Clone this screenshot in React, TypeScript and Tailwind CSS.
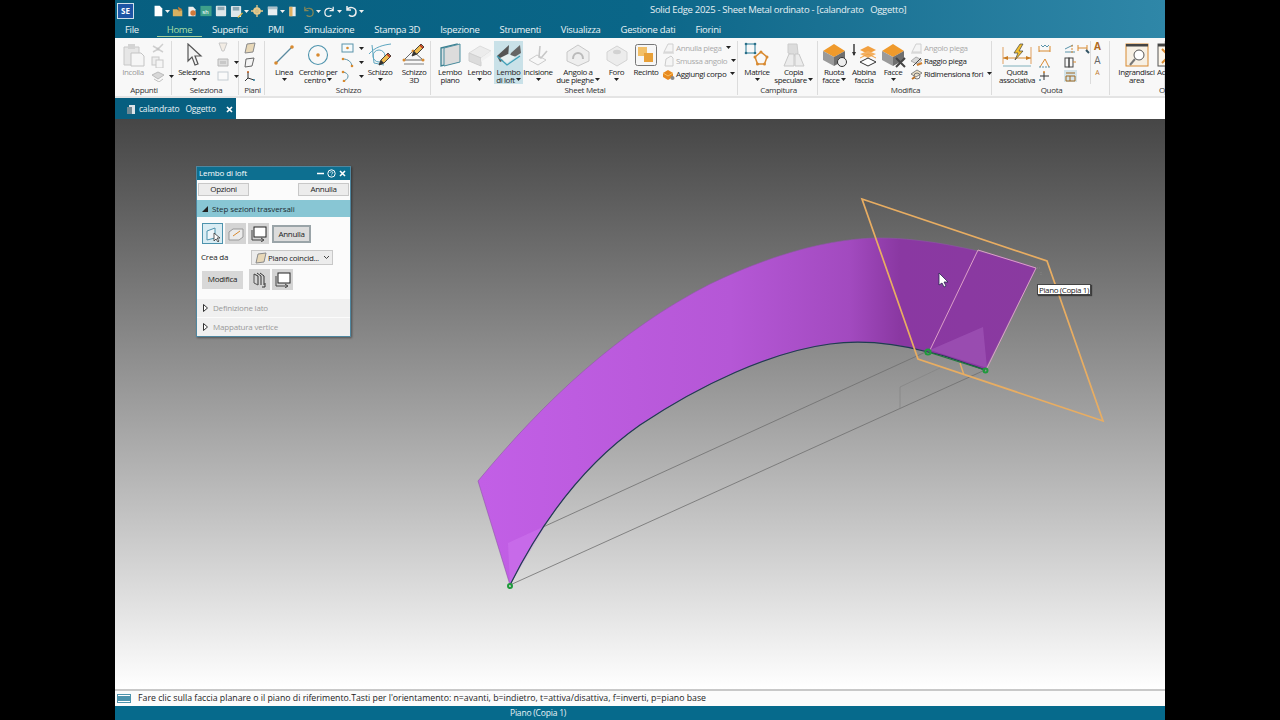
import React from "react";

const F = "font-['Open_Sans',sans-serif]";

const S = ({ w, h, children, className = "" }: { w: number; h: number; children: React.ReactNode; className?: string }) => (
  <svg width={w} height={h} viewBox={`0 0 ${w} ${h}`} className={`shrink-0 ${className}`}>{children}</svg>
);

const Caret = ({ color = "#222" }: { color?: string }) => (
  <svg width="5" height="3" viewBox="0 0 5 3" className="inline-block shrink-0"><path d="M0 0h5L2.5 3z" fill={color} /></svg>
);

const Btn = ({ w, l1, l2, caret, icon, active, dim }: { w: number; l1: string; l2?: string; caret?: "inline" | "below"; icon: React.ReactNode; active?: boolean; dim?: boolean }) => (
  <div style={{ width: w }} className={`flex h-[43px] shrink-0 flex-col items-center ${active ? "bg-[#c9e1e8]" : ""}`}>
    <div className="flex h-[27px] w-full items-center justify-center">{icon}</div>
    <div className={`whitespace-nowrap text-center text-[8px] leading-[8px] tracking-[-0.4px] ${dim ? "text-[#999]" : "text-[#222]"}`}>{l1}</div>
    {l2 ? (
      <div className="flex items-center gap-[1px] whitespace-nowrap text-center text-[8px] leading-[7.5px] tracking-[-0.4px] text-[#222]">
        {l2}{caret === "inline" && <Caret />}
      </div>
    ) : caret === "below" ? (
      <div className="mt-[2px] flex h-[3px] items-center"><Caret /></div>
    ) : null}
  </div>
);

const Group = ({ w, label, labelW = "pl-[2px] text-center", children }: { w: number; label: string; labelW?: string; children: React.ReactNode }) => (
  <div style={{ width: w }} className="relative flex h-[54px] shrink-0 flex-col border-r border-[#dcdcdc]">
    <div className="flex h-[43px] w-full">{children}</div>
    <div className={`mt-[1px] whitespace-nowrap text-[8px] leading-[9px] tracking-[-0.3px] text-[#333] ${labelW}`}>{label}</div>
  </div>
);

const Row = ({ icon, text, dim, caret }: { icon: React.ReactNode; text?: string; dim?: boolean; caret?: boolean }) => (
  <div className={`flex items-center gap-[1px] ${text ? "h-[13px]" : "h-[14px]"}`}>
    {icon}
    {text && <span className={`whitespace-nowrap text-[8px] tracking-[-0.38px] ${dim ? "text-[#aaa]" : "text-[#222]"}`}>{text}</span>}
    {caret && <span className="ml-[3px] flex"><Caret /></span>}
  </div>
);

/* ----- ribbon icons ----- */
const Paste = () => (
  <S w={24} h={24}><path d="M3 4h15v18H3z" fill="#e6e6e6" stroke="#c8c8c8" /><path d="M7 1h7v5H7z" fill="#d4d4d4" /><path d="M10 10h10l3 3v10H10z" fill="#f6f6f6" stroke="#c4c4c4" /></S>
);
const SmallGray = ({ k = 0 }: { k?: number }) => (
  <S w={14} h={12}>
    {k === 0 && <><path d="M2 4l5 3 5-5M2 10l5-3 5 3" stroke="#cfcfcf" strokeWidth="1.5" fill="none" /><circle cx="7" cy="7" r="1.5" fill="#c4c4c4" /></>}
    {k === 1 && <><rect x="1" y="1" width="7" height="8" fill="#eee" stroke="#c8c8c8" /><rect x="5" y="4" width="7" height="8" fill="#f6f6f6" stroke="#c8c8c8" /></>}
    {k === 2 && <><path d="M1 5l6-3 6 3-6 4z" fill="#d8d8d8" stroke="#bbb" /><path d="M3 9l5 3 4-3" fill="none" stroke="#c0c0c0" /></>}
    {k === 3 && <><path d="M3 1h8l-3 8H6z" fill="#f2ece4" stroke="#c8c8c8" /></>}
    {k === 4 && <><path d="M2 3h10v7H2z" fill="#dedede" stroke="#b8b8b8" /><path d="M4 5h6v3H4z" fill="#c8c8c8" /></>}
    {k === 5 && <><rect x="2" y="2" width="10" height="8" fill="#fafafa" stroke="#c4ccd2" /></>}
  </S>
);
const Cursor = () => (
  <S w={18} h={24}><path d="M3 1l0 17 4-4 3 8 3-1-3-8 6 0z" fill="#f3f3f3" stroke="#555" strokeWidth="1.2" /></S>
);
const Plane = ({ k }: { k: number }) => (
  <S w={14} h={12}>
    {k === 0 && <path d="M4 2l8-1-2 9-8 1z" fill="#e8d8b8" stroke="#8a8a8a" />}
    {k === 1 && <path d="M3 3l8-1-2 8-7 1z" fill="#f4f4f4" stroke="#666" />}
    {k === 2 && <g stroke="#333" fill="none"><path d="M5 2v6l-3 3M5 8l6 2" /><circle cx="5" cy="2" r="1" fill="#c06020" stroke="none" /><circle cx="11" cy="10" r="1" fill="#3080a0" stroke="none" /></g>}
  </S>
);
const LineI = () => (
  <S w={24} h={24}><path d="M4 20L20 4" stroke="#5a8aa0" strokeWidth="1.2" /><circle cx="4" cy="20" r="1.8" fill="#d88a30" /><circle cx="20" cy="4" r="1.8" fill="#d88a30" /></S>
);
const CircleI = () => (
  <S w={24} h={24}><circle cx="12" cy="12" r="9.5" fill="none" stroke="#4d93ad" strokeWidth="1.1" /><circle cx="12" cy="12" r="1.8" fill="#d88a30" /></S>
);
const Sk = ({ k }: { k: number }) => (
  <S w={14} h={12}>
    {k === 0 && <><rect x="1" y="2" width="11" height="8" fill="#f4fafc" stroke="#5a93aa" /><circle cx="6.5" cy="6" r="1.3" fill="#d88a30" /></>}
    {k === 1 && <><path d="M2 3c5 0 9 3 9 8" stroke="#5a93aa" fill="none" /><circle cx="2" cy="3" r="1.3" fill="#d88a30" /><circle cx="11" cy="10" r="1.3" fill="#d88a30" /></>}
    {k === 2 && <><path d="M2 2c6 1 7 6 1 9" stroke="#5a93aa" fill="none" /><circle cx="2" cy="2" r="1.3" fill="#d88a30" /><circle cx="3" cy="11" r="1.3" fill="#d88a30" /></>}
  </S>
);
const Pencil = ({ x, y }: { x: number; y: number }) => (
  <g transform={`translate(${x} ${y})`}>
    <path d="M0 12l2-5L9 0l3 3-7 7z" fill="#eebb50" stroke="#333" strokeWidth="0.9" />
    <path d="M8 1l3 3" stroke="#b83020" strokeWidth="1.6" />
    <path d="M0 12l2-5 3 3z" fill="#333" />
  </g>
);
const Schizzo = () => (
  <S w={26} h={26}><path d="M2 12C8 5 16 3 24 2" stroke="#5da6c0" fill="none" /><path d="M5 3l2 18 10 2" stroke="#5da6c0" fill="none" /><circle cx="12" cy="14" r="6" fill="none" stroke="#5da6c0" /><Pencil x={12} y={11} /></S>
);
const Schizzo3D = () => (
  <S w={26} h={26}><path d="M3 18L12 9l10 9z" fill="none" stroke="#666" /><path d="M3 22h20" stroke="#bbb" strokeWidth="2" /><circle cx="3" cy="18" r="1.5" fill="#d88a30" /><circle cx="12" cy="9" r="1.5" fill="#d88a30" /><circle cx="22" cy="18" r="1.5" fill="#d88a30" /><Pencil x={11} y={2} /></S>
);
const LemboPiano = () => (
  <S w={24} h={26}><path d="M3 6l16-4v18L3 24z" fill="#d8dfe2" stroke="#3b7f90" strokeWidth="1.3" /><path d="M6 6l16-4v18l-16 4z" fill="#dcdcdc" stroke="#4d8e9f" /></S>
);
const Lembo = () => (
  <S w={24} h={24}><path d="M1 10l11-7 11 5-10 7z" fill="#ececec" stroke="#ddd" /><path d="M1 10l12 5v8L1 18z" fill="#dcdcdc" stroke="#d0d0d0" /><path d="M13 15l10-7v4l-10 7z" fill="#f2f2f2" /></S>
);
const Loft = () => (
  <S w={26} h={26}><path d="M1 14l3 6 8-4 1-13z" fill="#555" /><path d="M12 19l13-8-1-8-9 8z" fill="#666" /><path d="M1 14l10 9 13-9" fill="none" stroke="#40a0b8" strokeWidth="1.3" /><path d="M4 16l7 5 9-6-8-3z" fill="#e6f0f2" /></S>
);
const Incisione = () => (
  <S w={24} h={24}><path d="M3 17l8-5 9 5-8 5z" fill="none" stroke="#ccc" /><path d="M14 3l-1 11 2 1 6-7" fill="none" stroke="#c8c8c8" strokeWidth="1.6" /></S>
);
const Angolo = () => (
  <S w={26} h={24}><path d="M2 9l11-7 11 7v9l-11 5L2 18z" fill="#eee" stroke="#c8c8c8" /><path d="M8 16c0-8 10-8 10 0" fill="none" stroke="#bbb" strokeWidth="2" /></S>
);
const Foro = () => (
  <S w={24} h={24}><path d="M2 9l10-6 10 6v8l-10 6-10-6z" fill="#ececec" stroke="#d4d4d4" /><ellipse cx="12" cy="9" rx="4" ry="2.2" fill="#d2d2d2" /></S>
);
const Recinto = () => (
  <S w={22} h={22}><rect x="0.5" y="0.5" width="21" height="21" rx="2" fill="#f6f6f6" stroke="#777" /><rect x="3" y="3" width="9" height="9" fill="#f3c068" /><rect x="9" y="9" width="9" height="9" fill="#e8a038" /></S>
);
const Tiny = ({ k }: { k: number }) => (
  <S w={13} h={12}>
    {k === 0 && <><path d="M2 10l4-8h5v8z" fill="#f5f5f5" stroke="#d0d0d0" /><path d="M1 11h11" stroke="#ccc" /></>}
    {k === 1 && <path d="M3 11l1-7 5-3 2 2v8z" fill="#f5f5f5" stroke="#ccc" />}
    {k === 2 && <><path d="M1 5l5-3 5 3v4l-5 3-5-3z" fill="#e88a20" /><path d="M1 5l5 3 5-3" fill="none" stroke="#f8c060" /><circle cx="10.5" cy="10" r="2" fill="#888" /></>}
    {k === 3 && <><path d="M1 6l5-4 6 3-5 4z" fill="#d8d8d8" stroke="#aaa" /><path d="M3 11l8-8" stroke="#444" /><path d="M7 10l5-2" stroke="#d08030" strokeWidth="2" /></>}
    {k === 4 && <><path d="M1 6l6-4 5 3-6 4z" fill="#eadfc6" stroke="#888" /><circle cx="7" cy="8" r="3" fill="none" stroke="#777" /><path d="M2 11l3-2" stroke="#c07020" strokeWidth="2" /></>}
  </S>
);
const Matrice = () => (
  <S w={26} h={26}>
    <rect x="2" y="2" width="9" height="9" fill="none" stroke="#4a90a8" strokeWidth="1.2" />
    {[[2, 2], [11, 2], [2, 11], [11, 11]].map(([a, b], i) => <circle key={i} cx={a} cy={b} r="1.3" fill="#2a6f88" />)}
    <path d="M17 10l6 5-2.5 7h-7L11 15z" fill="none" stroke="#d88a30" strokeWidth="1.5" />
    {[[17, 10], [23, 15], [20.5, 22], [13.5, 22], [11, 15]].map(([a, b], i) => <circle key={i} cx={a} cy={b} r="1.5" fill="#d88a30" />)}
  </S>
);
const Copia = () => (
  <S w={24} h={26}><path d="M6 2h9l1 9-3 3-7-3z" fill="#dcdcdc" stroke="#ccc" /><path d="M2 24l5-12h5v12zM13 24v-12h4l5 12z" fill="#ececec" stroke="#c8c8c8" /></S>
);
const Box = ({ children }: { children?: React.ReactNode }) => (
  <S w={28} h={26}>
    <path d="M3 9l11-7 11 7-11 6z" fill="#ef9a2c" />
    <path d="M3 9l11 6v9L3 18z" fill="#9a9a9a" />
    <path d="M14 15l11-6v9l-11 6z" fill="#6f6f6f" />
    {children}
  </S>
);
const Abbina = () => (
  <S w={26} h={26}><path d="M3 2v11" stroke="#333" strokeWidth="1.4" /><path d="M1 10l2 4 2-4z" fill="#333" /><path d="M9 8l8-4 8 4-8 4z" fill="#f2a040" /><path d="M9 12l8-3 8 3-8 4z" fill="#f4b060" /><path d="M9 20l8-4 8 4-8 4z" fill="#fff" stroke="#333" /><path d="M9 16l8-4 8 4" fill="none" stroke="#f0a040" /></S>
);
const QuotaA = () => (
  <S w={30} h={26}><path d="M1 5v17M29 5v17" stroke="#e0a060" /><path d="M1 16h28" stroke="#d88a30" /><path d="M1 16l5-2v4zM29 16l-5-2v4z" fill="#c87a20" /><path d="M18 2l-6 9h4l-3 7 8-9h-4l4-7z" fill="#f4c030" stroke="#444" strokeWidth="0.7" /><path d="M1 24h28" stroke="#a8c8d0" strokeWidth="1.5" /></S>
);
const Q = ({ k }: { k: number }) => (
  <S w={13} h={12}>
    {k === 0 && <><path d="M1 4v6M12 4v6M1 9h11" stroke="#d88a30" /><path d="M3 3l2 2 2-2 2 2 2-2" stroke="#5a93aa" fill="none" /></>}
    {k === 1 && <><path d="M2 11l5-8 4 8" stroke="#d88a30" fill="none" /><path d="M1 11h11" stroke="#5a93aa" strokeDasharray="2 1" /></>}
    {k === 2 && <><path d="M6 2v8M2 6h9" stroke="#333" /><circle cx="6" cy="2" r="1" fill="#d88a30" /><circle cx="2" cy="10" r="1" fill="#5a93aa" /></>}
    {k === 3 && <><path d="M1 7l8-4M1 10h10" stroke="#5a93aa" /><path d="M8 3v8" stroke="#d88a30" strokeDasharray="2 1" /></>}
    {k === 4 && <><rect x="1" y="2" width="4" height="9" fill="none" stroke="#444" /><rect x="5" y="2" width="4" height="9" fill="none" stroke="#444" /><path d="M9 6h3" stroke="#d88a30" /></>}
    {k === 5 && <><rect x="0" y="0" width="13" height="12" fill="#d4e4ea" /><path d="M2 3h9M2 6h9v5H2zM6 6v5" stroke="#a06820" fill="none" /></>}
    {k === 6 && <><path d="M1 3v6M10 3v6M1 6h9" stroke="#d88a30" /><path d="M9 8l3 3" stroke="#356" strokeWidth="2" /></>}
  </S>
);
const Zoom = () => (
  <S w={24} h={24}><rect x="1" y="1" width="22" height="22" fill="#f7f0e4" stroke="#d88a30" /><rect x="1" y="1" width="22" height="2.500" fill="#444" /><circle cx="14" cy="12" r="5" fill="#fff" stroke="#555" /><path d="M10 16l-5 6" stroke="#777" strokeWidth="2" /></S>
);
const Fit = () => (
  <S w={24} h={24}><rect x="1" y="1" width="22" height="22" fill="#fdf6ea" stroke="#555" /><rect x="1" y="1" width="22" height="2.500" fill="#444" /><path d="M5 6l5 5M19 6l-5 5M5 20l5-5M19 20l-5-5" stroke="#d88a30" strokeWidth="2" /></S>
);

/* ----- quick-access bar ----- */
const QA = ({ children, caret, w = 12, mr = "mr-[3px]" }: { children: React.ReactNode; caret?: boolean; w?: number; mr?: string }) => (
  <div className={`flex shrink-0 items-center gap-[1px] ${mr}`}>
    <svg width={w} height={w} viewBox="0 0 14 14" className="shrink-0">{children}</svg>
    {caret && <Caret color="#f0f0f0" />}
  </div>
);

const Qat = () => (
  <div className="ml-[18px] flex items-center">
    <QA caret w={12} mr="mr-[2px]"><path d="M3 1h6l3 3v9H3z" fill="#fff" /></QA>
    <QA w={12} mr="mr-[2px]"><path d="M1 5h5l1 1h5v7H1z" fill="#d8b060" /><path d="M7 2l5 3-4 3z" fill="#c87a30" /></QA>
    <QA w={11} mr="mr-[3px]"><path d="M3 1h6l3 3v9H3z" fill="#eee" /><circle cx="9" cy="9" r="3.500" fill="#d0793a" /></QA>
    <QA w={12}><rect x="0.500" y="1" width="13" height="12" fill="#3ea08a" /><text x="2.500" y="10" fontSize="7" fill="#fff" fontFamily="Liberation Sans">sh</text></QA>
    <QA w={12}><rect x="1" y="1" width="12" height="12" rx="1" fill="#dfe7ea" /><rect x="3" y="2" width="8" height="4" fill="#8ca7b2" /></QA>
    <QA caret w={13} mr="mr-[2px]"><rect x="1" y="1" width="11" height="12" rx="1" fill="#dfe7ea" /><rect x="3" y="2" width="7" height="4" fill="#8ca7b2" /><path d="M8 13l5-5 1 1-5 5z" fill="#e6b640" /></QA>
    <QA w={12} mr="mr-[4px]"><circle cx="7" cy="7" r="4.500" fill="#e8c98a" /><circle cx="7" cy="7" r="1.800" fill="#0c6585" /><path d="M7 0v14M0 7h14" stroke="#e8c98a" strokeWidth="1.500" /></QA>
    <QA caret w={12} mr="mr-[2px]"><rect x="1" y="2" width="11" height="10" fill="#e8eef0" /><rect x="1" y="2" width="11" height="3" fill="#aac0c8" /></QA>
    <QA w={11} mr="mr-[4px]"><rect x="3" y="1" width="8" height="12" fill="#e6ecee" /><rect x="3" y="1" width="4" height="12" fill="#e0b060" /></QA>
    <QA caret w={13} mr="mr-[2px]"><path d="M3 6c2-4 9-3 9 2s-5 5-7 3M3 2v4h4" fill="none" stroke="#c89a40" strokeWidth="1.300" opacity="0.65" /></QA>
    <QA caret w={13} mr="mr-[2px]"><path d="M11 6C9 2 2 3 2 8s5 5 7 3M11 2v4H7" fill="none" stroke="#f0f0f0" strokeWidth="1.300" /></QA>
    <QA caret w={14}><path d="M3 6c2-4 9-3 9 2s-5 5-7 3M3 2v4h4" fill="none" stroke="#f0f0f0" strokeWidth="1.500" /></QA>
  </div>
);

const tabs = ["Superfici", "PMI", "Simulazione", "Stampa 3D", "Ispezione", "Strumenti", "Visualizza", "Gestione dati", "Fiorini"];

/* ----- dialog bits ----- */
const DBtn = ({ children, active }: { children: React.ReactNode; active?: boolean }) => (
  <div className={`flex h-[21px] w-[21px] items-center justify-center ${active ? "border border-[#4d93ad] bg-[#d9ecf3]" : "bg-[#d4d4d4]"}`}>{children}</div>
);
const Frame = () => (
  <S w={17} h={16}><rect x="4" y="1" width="12" height="10" fill="#fff" stroke="#222" /><path d="M2 4v10h11M11 12l3 2-3 2" fill="none" stroke="#444" /></S>
);
const DSection = ({ label }: { label: string }) => (
  <div className="mt-[1px] flex h-[18px] items-center gap-[5px] bg-[#f0f0f0] pl-[6px] text-[8px] tracking-[-0.2px] text-[#9a9a9a]">
    <svg width="5" height="8" viewBox="0 0 5 8"><path d="M0.500 0.500L4.500 4 0.500 7.500z" fill="#fff" stroke="#333" /></svg>
    {label}
  </div>
);

const Dialog = () => (
  <div className="absolute left-[81px] top-[47px] w-[155px] border border-[#4f87a0] bg-[#fbfbfb] shadow-[1px_1px_2px_rgba(0,0,0,0.4)]">
    <div className="flex h-[13px] items-center justify-between bg-[#0d6f90] pb-[1px] pl-[2px] pr-[4px] text-[8px] tracking-[-0.1px] text-white">
      <span>Lembo di loft</span>
      <div className="flex items-center gap-[3px]">
        <S w={7} h={7}><path d="M0 3.500h7" stroke="#fff" strokeWidth="1.500" /></S>
        <S w={9} h={9}><circle cx="4.500" cy="4.500" r="3.700" fill="none" stroke="#fff" /><path d="M3.200 3.600c.3-1.400 2.800-1.200 2.600.2-.1.800-1.200.9-1.200 1.700M4.600 6.600v.6" fill="none" stroke="#fff" strokeWidth="0.800" /></S>
        <S w={7} h={7}><path d="M1 1l5 5M6 1L1 6" stroke="#fff" strokeWidth="1.600" /></S>
      </div>
    </div>
    <div className="flex justify-between px-[1px] pt-[3px]">
      <div className="flex h-[13px] w-[51px] items-center justify-center border border-[#c8c8c8] bg-[#ececec] pb-[1px] text-[8px] tracking-[-0.3px] text-[#222]">Opzioni</div>
      <div className="flex h-[13px] w-[51px] items-center justify-center border border-[#c8c8c8] bg-[#ececec] pb-[1px] text-[8px] tracking-[-0.3px] text-[#222]">Annulla</div>
    </div>
    <div className="mt-[4px] flex h-[17px] items-center gap-[4px] bg-[#88c6d4] pl-[5px] pt-[1px] text-[8px] tracking-[-0.1px] text-[#1c2c32]">
      <svg width="6" height="6" viewBox="0 0 6 6"><path d="M6 0v6H0z" fill="#222" /></svg>
      Step sezioni trasversali
    </div>
    <div className="flex items-center gap-[2px] pl-[5px] pt-[6px]">
      <DBtn active><S w={16} h={16}><path d="M2 5l8-3v10l-8 2z" fill="#eef6fa" stroke="#4d93ad" /><path d="M9 7v8l2-2 2 3 1-1-2-3h3z" fill="#fff" stroke="#333" strokeWidth="0.800" /></S></DBtn>
      <DBtn><S w={16} h={14}><path d="M1 5l4-3h10v8l-4 3H1z" fill="#ececec" stroke="#999" /><path d="M5 9l7-5" stroke="#d88a30" /></S></DBtn>
      <DBtn><Frame /></DBtn>
      <div className="ml-[1px] flex h-[18px] w-[39px] items-center justify-center border-2 border-[#9aa4a8] bg-[#dcdcdc] text-[8px] tracking-[-0.3px] text-[#222]">Annulla</div>
    </div>
    <div className="flex items-center pl-[4px] pt-[6px] text-[8px] tracking-[-0.2px] text-[#222]">
      <span className="w-[50px] pb-[1px]">Crea da</span>
      <div className="flex h-[15px] w-[82px] items-center border border-[#c8c8c8] bg-[#ececec] pl-[2px]">
        <Plane k={0} />
        <span className="whitespace-nowrap text-[8px] tracking-[-0.3px]">Piano coincid...</span>
        <svg width="7" height="5" viewBox="0 0 7 5" className="ml-auto mr-[2px]"><path d="M1 1l2.500 2.500L6 1" fill="none" stroke="#444" /></svg>
      </div>
    </div>
    <div className="flex items-center pl-[5px] pt-[4px]">
      <div className="mr-[6px] flex h-[18px] w-[41px] items-center justify-center bg-[#d8d8d8] pb-[1px] text-[8px] tracking-[-0.3px] text-[#222]">Modifica</div>
      <DBtn><S w={17} h={16}><path d="M3 2l4 2v9M6 1l4 3v9M9 1l4 3v9" fill="none" stroke="#333" /><path d="M3 2v9l4 2" fill="none" stroke="#555" /><path d="M14 11v4h-3" fill="none" stroke="#333" /></S></DBtn>
      <div className="ml-[2px]"><DBtn><Frame /></DBtn></div>
    </div>
    <div className="mt-[9px]">
      <DSection label="Definizione lato" />
      <DSection label="Mappatura vertice" />
    </div>
  </div>
);

/* ----- the 3-D model, drawn in page coordinates ----- */
const Model = () => (
  <svg className="absolute inset-0" width="1050" height="570" viewBox="115 119 1050 570">
    <defs>
      <linearGradient id="sheet" gradientUnits="userSpaceOnUse" x1="480" y1="0" x2="1036" y2="0">
        <stop offset="0" stopColor="#c25fe6" />
        <stop offset="0.45" stopColor="#b557d6" />
        <stop offset="0.665" stopColor="#a24abf" />
        <stop offset="0.755" stopColor="#8a38a2" />
        <stop offset="1" stopColor="#8a3aa0" />
      </linearGradient>
    </defs>
    <path d="M510 585L985 370M508 543L930 350" stroke="#6f6f6f" strokeWidth="0.8" fill="none" />
    <path d="M900 408V387L940 368" stroke="#858585" strokeWidth="0.8" fill="none" />
    <path
      d="M478 481C545 400 620 330 710 284C770 255 830 238 880 238C925 238 985 250 1036 268L985 370C965 363 945 355 928 352C890 342 860 340 830 344C770 352 700 385 640 425C590 460 545 515 510 585Z"
      fill="url(#sheet)"
      stroke="#8f55a8"
      strokeWidth="0.6"
    />
    <path d="M510 585L508 543L545 526Z" fill="#d07af0" opacity="0.45" />
    <path d="M930 350L983 327L987 368Z" fill="#a55dbd" opacity="0.55" />
    <path
      d="M985 370C965 363 945 355 928 352C890 342 860 340 830 344C770 352 700 385 640 425C590 460 545 515 510 585"
      fill="none"
      stroke="#1f3d50"
      strokeWidth="1.2"
    />
    <path d="M928 352L985 370" stroke="#1f7a3a" strokeWidth="1.2" />
    <path d="M862 199L1047 261L1103 421L918 359Z" fill="none" stroke="#e8ad62" strokeWidth="1.7" />
    <path d="M960 363l4 12" stroke="#e8ad62" strokeWidth="1.4" />
    <path d="M930 350L978 250L1036 268L987 368" fill="none" stroke="#dca0c8" strokeWidth="1" />
    <g fill="none" stroke="#1f9a3c" strokeWidth="2">
      <circle cx="928" cy="352" r="2.6" />
      <circle cx="985.500" cy="370.500" r="2" />
      <circle cx="510" cy="586" r="2" />
    </g>
    <path d="M1037 268l4 0M1041 272v4" stroke="#888" strokeWidth="0.8" strokeDasharray="1 1" />
    <path d="M939 273v12l3-2 2 4 2-1-2-4h4z" fill="#fff" stroke="#2a2a50" strokeWidth="0.8" />
  </svg>
);

export default function App() {
  return (
    <div className={`flex h-[720px] w-[1280px] justify-center overflow-hidden bg-black ${F}`}>
      <div className="flex h-[720px] w-[1050px] flex-col overflow-hidden">
        {/* title + menu */}
        <div className="h-[38px] shrink-0 bg-gradient-to-r from-[#075f80] via-[#0a6688] to-[#2f87a8]">
          <div className="relative flex h-[22px] items-center">
            <div className="ml-[2px] flex h-[16px] w-[17px] items-center justify-center border border-[#cfe0ea] bg-[#1d55a5] text-[8px] font-bold leading-none text-white">SE</div>
            <Qat />
            <div className="absolute left-[535px] top-[3px] whitespace-nowrap text-[9.5px] tracking-[-0.3px] text-[#e6f0f4]">Solid Edge 2025 - Sheet Metal ordinato - [calandrato&nbsp;&nbsp; Oggetto]</div>
          </div>
          <div className="flex h-[16px] items-start text-[9.5px] leading-[16px] tracking-[-0.3px] text-[#e8f2f5]">
            <span className="ml-[10px] w-[32px]">File</span>
            <span className="h-[15px] w-[45px] border-b border-[#a8cf9a] text-center text-[#a9dfa6]">Home</span>
            <div className="ml-[10px] flex gap-[20px]">
              {tabs.map((t) => <span key={t} className="whitespace-nowrap">{t}</span>)}
            </div>
          </div>
        </div>

        {/* ribbon */}
        <div className="flex h-[60px] shrink-0 overflow-hidden border-b-2 border-[#e4e4e4] bg-[#f8f8f8] pt-[3px]">
          <Group w={57} label="Appunti">
            <Btn w={36} l1="Incolla" dim icon={<Paste />} />
            <div className="flex flex-col">
              <Row icon={<SmallGray k={0} />} />
              <Row icon={<SmallGray k={1} />} />
              <Row icon={<SmallGray k={2} />} caret />
            </div>
          </Group>
          <Group w={67} label="Seleziona">
            <Btn w={44} l1="Seleziona" caret="below" icon={<Cursor />} />
            <div className="flex flex-col">
              <Row icon={<SmallGray k={3} />} />
              <Row icon={<SmallGray k={4} />} caret />
              <Row icon={<SmallGray k={5} />} caret />
            </div>
          </Group>
          <Group w={26} label="Piani">
            <div className="flex flex-col pl-[4px]">
              <Row icon={<Plane k={0} />} />
              <Row icon={<Plane k={1} />} />
              <Row icon={<Plane k={2} />} />
            </div>
          </Group>
          <Group w={166} label="Schizzo">
            <Btn w={38} l1="Linea" caret="below" icon={<LineI />} />
            <Btn w={30} l1="Cerchio per" l2="centro" caret="inline" icon={<CircleI />} />
            <div className="flex w-[30px] flex-col pl-[8px]">
              <Row icon={<Sk k={0} />} caret />
              <Row icon={<Sk k={1} />} caret />
              <Row icon={<Sk k={2} />} caret />
            </div>
            <Btn w={34} l1="Schizzo" caret="below" icon={<Schizzo />} />
            <Btn w={34} l1="Schizzo" l2="3D" icon={<Schizzo3D />} />
          </Group>
          <Group w={307} label="Sheet Metal">
            <div className="w-[4px]" />
            <Btn w={30} l1="Lembo" l2="piano" icon={<LemboPiano />} />
            <Btn w={29} l1="Lembo" caret="below" icon={<Lembo />} />
            <Btn w={29} l1="Lembo" l2="di loft" caret="inline" active icon={<Loft />} />
            <Btn w={30} l1="Incisione" caret="below" icon={<Incisione />} />
            <Btn w={50} l1="Angolo a" l2="due pieghe" caret="inline" icon={<Angolo />} />
            <Btn w={27} l1="Foro" caret="below" icon={<Foro />} />
            <Btn w={32} l1="Recinto" icon={<Recinto />} />
            <div className="flex flex-col">
              <Row icon={<Tiny k={0} />} text="Annulla piega" dim caret />
              <Row icon={<Tiny k={1} />} text="Smussa angolo" dim caret />
              <Row icon={<Tiny k={2} />} text="Aggiungi corpo" caret />
            </div>
          </Group>
          <Group w={80} label="Campitura">
            <Btn w={38} l1="Matrice" caret="below" icon={<Matrice />} />
            <Btn w={35} l1="Copia" l2="speculare" caret="inline" icon={<Copia />} />
          </Group>
          <Group w={174} label="Modifica">
            <div className="w-[2px]" />
            <Btn w={32} l1="Ruota" l2="facce" caret="inline" icon={<Box><circle cx="22" cy="20" r="4.500" fill="#eee" stroke="#333" /></Box>} />
            <Btn w={28} l1="Abbina" l2="faccia" icon={<Abbina />} />
            <Btn w={30} l1="Facce" caret="below" icon={<Box><path d="M17 16l9 9M26 16l-9 9" stroke="#444" strokeWidth="2" /></Box>} />
            <div className="flex flex-col pl-[2px]">
              <Row icon={<Tiny k={0} />} text="Angolo piega" dim />
              <Row icon={<Tiny k={3} />} text="Raggio piega" />
              <Row icon={<Tiny k={4} />} text="Ridimensiona fori" caret />
            </div>
          </Group>
          <Group w={118} label="Quota">
            <Btn w={50} l1="Quota" l2="associativa" icon={<QuotaA />} />
            <div className="-ml-[4px] flex w-[24px] flex-col">
              <Row icon={<Q k={0} />} />
              <Row icon={<Q k={1} />} />
              <Row icon={<Q k={2} />} />
            </div>
            <div className="flex w-[28px] flex-col pl-[2px]">
              <div className="flex h-[14px] items-center"><Q k={3} /><Q k={6} /></div>
              <div className="flex h-[14px] items-center"><Q k={4} /></div>
              <div className="flex h-[14px] items-center"><Q k={5} /></div>
            </div>
            <div className="flex w-[14px] flex-col items-center border-l border-[#dcdcdc] leading-none">
              <span className="h-[14px] text-[10px] font-bold text-[#b06a20]">A</span>
              <span className="h-[14px] text-[10px] text-[#666]">A</span>
              <span className="h-[12px] text-[7px] text-[#c07a30]">A</span>
            </div>
          </Group>
          <Group w={55} label="O" labelW="pl-[49px] text-left">
            <div className="w-[6px] shrink-0" />
            <Btn w={41} l1="Ingrandisci" l2="area" icon={<Zoom />} />
            <div className="w-[8px] shrink-0 overflow-hidden">
              <div className="flex h-[27px] items-center"><Fit /></div>
              <div className="text-[8px] leading-[8px] tracking-[-0.4px] text-[#222]">Ac</div>
            </div>
          </Group>
        </div>

        {/* document tab row */}
        <div className="flex h-[21px] shrink-0 items-stretch bg-white">
          <div className="flex w-[121px] items-center bg-[#075f80] pl-[11px] pr-[3px] pt-[1px] text-[8.5px] tracking-[-0.2px] text-[#eaf3f6]">
            <S w={10} h={11}><path d="M3 1h6v9H3z" fill="#dce4e8" /><path d="M1 3h5v7H1z" fill="#6f8a95" /></S>
            <span className="ml-[3px] whitespace-nowrap">calandrato&nbsp;&nbsp; Oggetto</span>
            <S w={7} h={7} className="ml-auto"><path d="M1 1l5 5M6 1L1 6" stroke="#fff" strokeWidth="1.700" /></S>
          </div>
        </div>

        {/* viewport */}
        <div className="relative h-[570px] shrink-0 bg-gradient-to-b from-[#464646] to-white">
          <Model />
          <Dialog />
          <div className="absolute left-[922px] top-[165px] flex h-[11px] items-center whitespace-nowrap border border-[#444] bg-white px-[1px] text-[8px] tracking-[-0.38px] text-[#222] shadow-[1px_1px_1px_rgba(0,0,0,0.5)]">Piano (Copia 1)</div>
        </div>

        {/* command bar */}
        <div className="flex h-[17px] shrink-0 items-center border-t-2 border-[#c8c8c8] bg-[#fbfbfb]">
          <div className="ml-[2px] flex h-[9px] w-[14px] flex-col justify-between bg-[#4d93ad] p-[1px]">
            <div className="h-[1px] bg-white" /><div className="h-[1px] bg-white" />
          </div>
          <span className="ml-[7px] whitespace-nowrap text-[8.75px] text-[#222]">Fare clic sulla faccia planare o il piano di riferimento.Tasti per l'orientamento: n=avanti, b=indietro, t=attiva/disattiva, f=inverti, p=piano base</span>
        </div>

        {/* status */}
        <div className="flex h-[14px] shrink-0 items-center bg-[#066a8c] pl-[395px] text-[8.5px] tracking-[-0.2px] text-[#e8f2f5]">
          Piano (Copia 1)
        </div>
      </div>
    </div>
  );
}
